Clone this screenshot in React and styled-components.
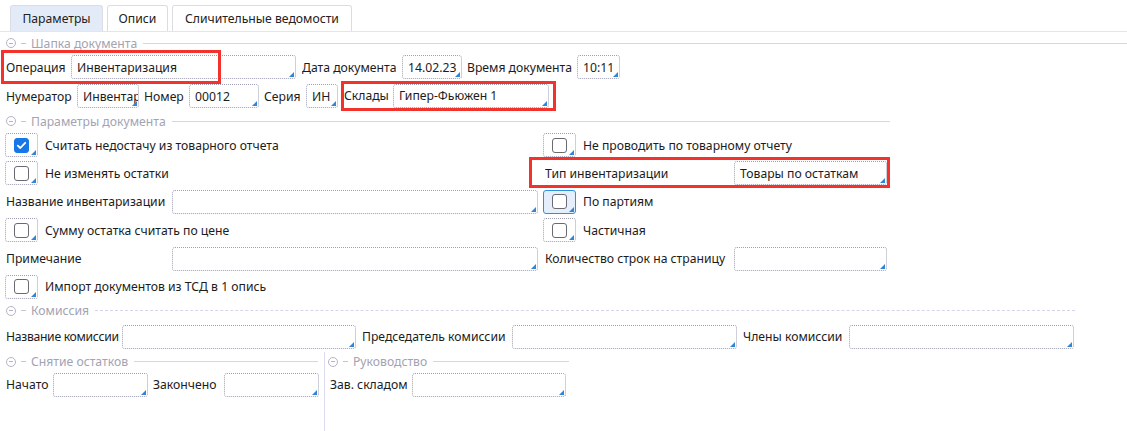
import React from "react";
import styled, { createGlobalStyle, css } from "styled-components";

const Global = createGlobalStyle`
  html, body { margin: 0; padding: 0; background: #fff; }
  body {
    font-family: "Noto Sans", "Open Sans", sans-serif;
    font-size: 12.2px;
    color: #1c1c1c;
  }
  * { box-sizing: border-box; }
`;

const Page = styled.div`
  width: 1127px;
  height: 431px;
  overflow: hidden;
  display: flex;
  flex-direction: column;
`;

const TabBar = styled.div`
  display: flex;
  gap: 4px;
  padding: 5px 0 0 10px;
  border-bottom: 1px solid #e4e4ec;
  height: 32px;
`;

const Tab = styled.div`
  height: 26px;
  width: ${(p) => p.w}px;
  display: flex;
  align-items: center;
  justify-content: center;
  border: 1px solid #dcdce4;
  border-bottom: none;
  border-radius: 3px 3px 0 0;
  background: ${(p) => (p.active ? "#e2ebf7" : "#fff")};
  color: #222;
`;

const Header = styled.div`
  display: flex;
  align-items: center;
  height: 16px;
  margin-top: ${(p) => p.mt || 0}px;
  padding-left: ${(p) => p.pl ?? 6}px;
  width: ${(p) => (p.w ? `${p.w}px` : "100%")};
  color: #a3a3b3;
  white-space: nowrap;
`;

const CollapseIcon = styled.span`
  width: 10px;
  height: 10px;
  border: 1px solid #b4b4c6;
  border-radius: 50%;
  position: relative;
  flex: none;
  &::after {
    content: "";
    position: absolute;
    left: 2px;
    right: 2px;
    top: 3.5px;
    height: 1px;
    background: #b4b4c6;
  }
`;

const Dash = styled.span`
  width: 5px;
  height: 1px;
  background: #c4c4d6;
  margin: 0 5px 0 5px;
  flex: none;
`;

const HeaderLine = styled.span`
  flex: 1;
  margin-left: 6px;
  border-top: 1px ${(p) => (p.dashed ? "dashed" : "solid")} #d4d4ee;
`;

const Row = styled.div`
  display: flex;
  align-items: center;
  height: 24px;
  margin-top: ${(p) => p.mt || 0}px;
  padding-left: ${(p) => p.pl ?? 6}px;
  position: relative;
`;

const Label = styled.span`
  width: ${(p) => p.w}px;
  margin-left: ${(p) => p.ml || 0}px;
  letter-spacing: ${(p) => (p.tight ? "-0.3px" : "normal")};
  flex: none;
  white-space: nowrap;
  overflow: hidden;
`;

const cornerMark = css`
  &::after {
    content: "";
    position: absolute;
    right: 1px;
    bottom: 1px;
    width: 0;
    height: 0;
    border-left: 5px solid transparent;
    border-bottom: 5px solid #2f86d8;
  }
`;

const Input = styled.div`
  position: relative;
  flex: none;
  width: ${(p) => p.w}px;
  height: 24px;
  margin-right: ${(p) => p.mr ?? 0}px;
  border: 1px dotted #9f9fb4;
  border-radius: 3px;
  padding: 0 5px;
  display: flex;
  align-items: center;
  white-space: nowrap;
  overflow: hidden;
  ${cornerMark}
`;

const CheckWrap = styled.div`
  position: relative;
  flex: none;
  width: 33px;
  height: 24px;
  margin-left: -1px;
  margin-right: 7px;
  border-radius: 3px;
  display: flex;
  align-items: center;
  justify-content: center;
  border: 1px ${(p) => (p.focused ? "solid #2d8fe2" : "dotted #9f9fb4")};
  background: ${(p) => (p.focused ? "#e5effb" : "#fff")};
  ${cornerMark}
`;

const Box = styled.span`
  width: 15px;
  height: 15px;
  border-radius: 3px;
  border: 1.5px solid ${(p) => (p.checked ? "#1877e6" : "#6a6a72")};
  background: ${(p) => (p.checked ? "#1877e6" : "#fff")};
  display: flex;
  align-items: center;
  justify-content: center;
`;

const Check = ({ checked, focused, children }) => (
  <>
    <CheckWrap focused={focused}>
      <Box checked={checked}>
        {checked && (
          <svg width="11" height="11" viewBox="0 0 11 11">
            <path d="M1.8 5.6 L4.3 8 L9.2 2.8" fill="none" stroke="#fff" strokeWidth="1.8" strokeLinecap="round" strokeLinejoin="round" />
          </svg>
        )}
      </Box>
    </CheckWrap>
    <span>{children}</span>
  </>
);

const Annotation = styled.div`
  position: absolute;
  border: 3px solid #f4322c;
  pointer-events: none;
  left: ${(p) => p.x}px;
  top: ${(p) => p.y}px;
  width: ${(p) => p.w}px;
  height: ${(p) => p.h}px;
`;

const Boxed = styled.div`
  display: flex;
  align-items: center;
  border: 3px solid #f4322c;
  margin: ${(p) => p.m};
  padding: ${(p) => p.p};
  flex: none;
`;

const Grid = styled.div`
  display: grid;
  grid-template-columns: 538px 400px;
  grid-auto-rows: 24px;
  row-gap: 4.4px;
  margin-top: 4px;
`;

const Cell = styled.div`
  display: flex;
  align-items: center;
  padding-left: 6px;
  white-space: nowrap;
`;

const Bottom = styled.div`
  display: flex;
  flex: 1;
  margin-top: 3px;
`;

const Column = styled.div`
  width: ${(p) => p.w}px;
  flex: none;
  padding-top: 2px;
  border-right: ${(p) => (p.divider ? "1px solid #dcdcf0" : "none")};
`;

const SectionHeader = ({ children, ...rest }) => (
  <Header {...rest}>
    <CollapseIcon />
    <Dash />
    <span>{children}</span>
    <HeaderLine dashed={rest.dashed} />
  </Header>
);

export default function App() {
  return (
    <Page>
      <Global />
      <TabBar>
        <Tab w={93} active>Параметры</Tab>
        <Tab w={61}>Описи</Tab>
        <Tab w={180}>Сличительные ведомости</Tab>
      </TabBar>

      <SectionHeader mt={3}>Шапка документа</SectionHeader>

      <Row mt={4}>
        <Label w={65}>Операция</Label>
        <Input w={225} mr={6}>Инвентаризация</Input>
        <Label w={100}>Дата документа</Label>
        <Input w={60} mr={5}>14.02.23</Input>
        <Label w={110}>Время документа</Label>
        <Input w={43}>10:11</Input>
        <Annotation x={1} y={-5} w={220} h={34} />
      </Row>

      <Row mt={5}>
        <Label w={71}>Нумератор</Label>
        <Input w={62} mr={5}>Инвентар</Input>
        <Label w={45}>Номер</Label>
        <Input w={70} mr={5}>00012</Input>
        <Label w={42}>Серия</Label>
        <Input w={32} mr={3}>ИН</Input>
        <Boxed m="-3px 0 -2px 0" p="0 4px 0 0">
          <Label w={49}>Склады</Label>
          <Input w={156}>Гипер-Фьюжен 1</Input>
        </Boxed>
      </Row>

      <SectionHeader mt={5} w={890}>Параметры документа</SectionHeader>

      <Grid>
        <Cell><Check checked>Считать недостачу из товарного отчета</Check></Cell>
        <Cell><Check>Не проводить по товарному отчету</Check></Cell>

        <Cell><Check>Не изменять остатки</Check></Cell>
        <Cell>
          <Boxed m="-4px 0 -3px -15px" p="1px 0 0 13px">
            <Label w={189}>Тип инвентаризации</Label>
            <Input w={153}>Товары по остаткам</Input>
          </Boxed>
        </Cell>

        <Cell>
          <Label w={166}>Название инвентаризации</Label>
          <Input w={366} />
        </Cell>
        <Cell><Check focused>По партиям</Check></Cell>

        <Cell><Check>Сумму остатка считать по цене</Check></Cell>
        <Cell><Check>Частичная</Check></Cell>

        <Cell>
          <Label w={166}>Примечание</Label>
          <Input w={366} />
        </Cell>
        <Cell>
          <Label w={189} ml={1}>Количество строк на страницу</Label>
          <Input w={153} />
        </Cell>

        <Cell><Check>Импорт документов из ТСД в 1 опись</Check></Cell>
        <Cell />
      </Grid>

      <SectionHeader mt={4} w={1075} dashed>Комиссия</SectionHeader>

      <Row mt={6}>
        <Label w={116} tight>Название комиссии</Label>
        <Input w={234} mr={6} />
        <Label w={150}>Председатель комиссии</Label>
        <Input w={225} mr={6} />
        <Label w={106}>Члены комиссии</Label>
        <Input w={225} />
      </Row>

      <Bottom>
        <Column w={325} divider>
          <SectionHeader w={318}>Снятие остатков</SectionHeader>
          <Row mt={3}>
            <Label w={47}>Начато</Label>
            <Input w={95} mr={5} />
            <Label w={71}>Закончено</Label>
            <Input w={95} />
          </Row>
        </Column>
        <Column w={260}>
          <SectionHeader w={244} pl={3}>Руководство</SectionHeader>
          <Row mt={3} pl={5}>
            <Label w={82}>Зав. складом</Label>
            <Input w={154} />
          </Row>
        </Column>
      </Bottom>
    </Page>
  );
}
